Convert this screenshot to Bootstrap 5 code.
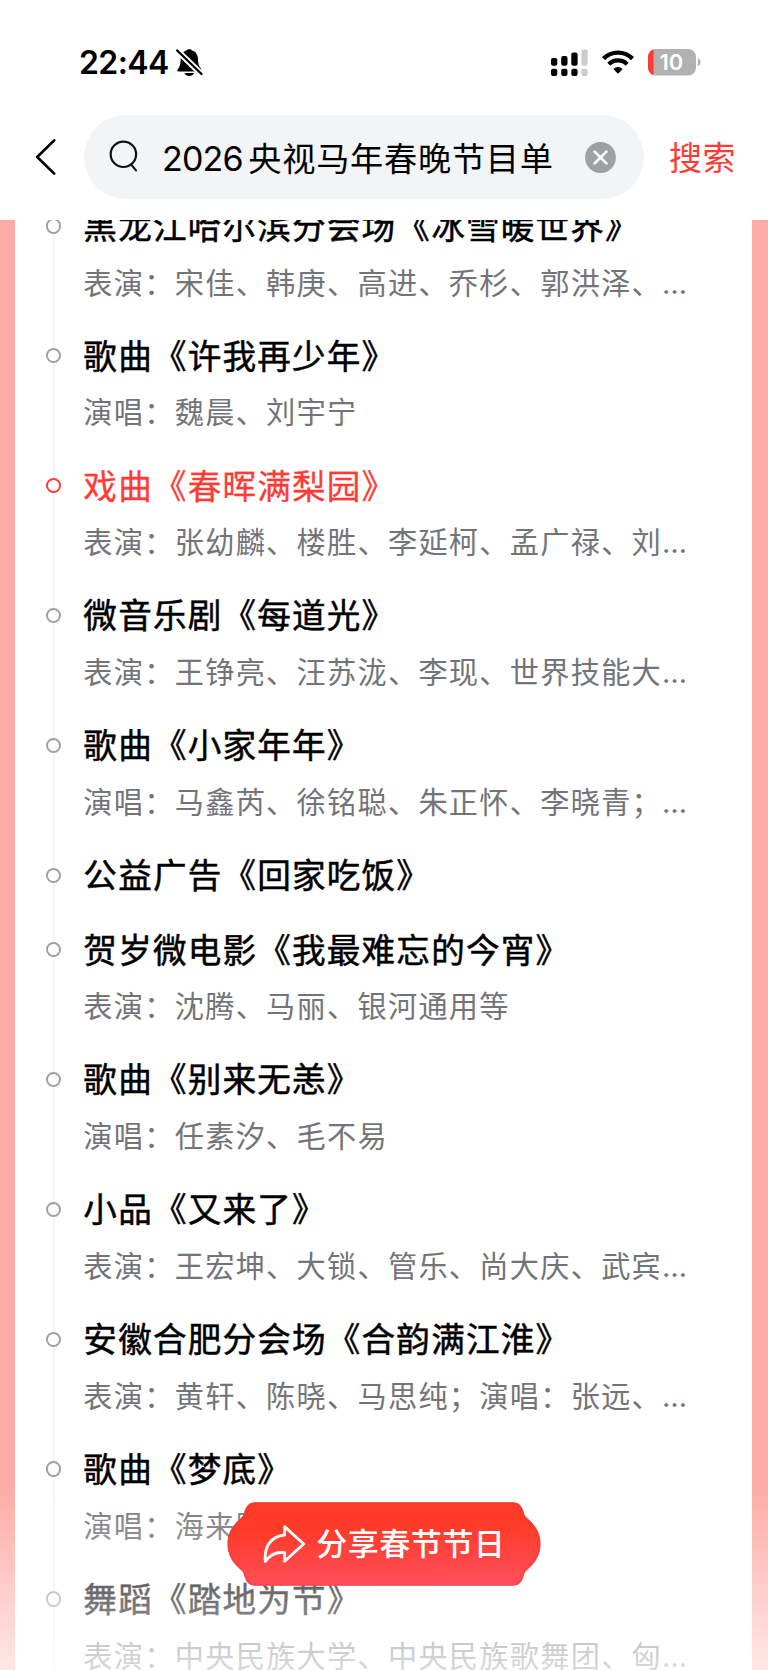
<!DOCTYPE html>
<html lang="zh-CN">
<head>
<meta charset="utf-8">
<meta name="viewport" content="width=device-width, initial-scale=1">
<title>2026央视马年春晚节目单</title>
<link href="https://cdn.jsdelivr.net/npm/bootstrap@5.3.0/dist/css/bootstrap.min.css" rel="stylesheet">
<style>
  body { font-family: "Noto Sans CJK SC", sans-serif; color: #000; background: #fff; }
  .screen { width: 768px; height: 1670px; }
  .latin { font-family: Inter, "Liberation Sans", sans-serif; }
  .top-bar { height: 220px; background: #fff; }
  .status-bar { height: 115px; padding: 46px 67px 0 79px; }
  .status-left { height: 33px; }
  .clock { font-size: 32px; font-weight: 600; line-height: 33px; letter-spacing: -.6px; width: 97px; }
  .status-right { height: 33px; }
  .search-row { height: 84px; }
  .back-btn { width: 84px; padding-left: 34px; }
  .search-pill { width: 559.5px; height: 84px; background: #f3f4f6; padding-left: 24px; }
  .query { font-size: 33.2px; line-height: 84px; height: 85px; letter-spacing: .75px; margin-left: 22px; width: 403px; }
  .query .latin { font-size: 34px; letter-spacing: -.8px; margin-right: 5.5px; }
  .search-link { font-size: 33px; line-height: 84px; height: 87px; letter-spacing: .6px; color: #ff3b36; margin-left: 25.5px; }
  .stage { height: 1450px; background: #feaba6; padding: 0 15.6px 0 15.4px; }
  .sheet { height: 1450px; background: #fff; }
  .program { margin-top: -17.2px; padding-left: 30.4px; }
  .entry { padding-bottom: 28.4px; }
  .entry::before { content: ""; position: absolute; left: 7px; top: 23px; bottom: -23px; width: 2px; background: #f4f4f5; }
  .dot { width: 15.4px; height: 15.4px; border: 2px solid #9fa0a6; background: #fff; margin-top: 15.4px; }
  .entry-body { margin-left: 22.2px; }
  .entry-title { font-size: 33.6px; line-height: 44px; height: 46px; letter-spacing: 1.2px; -webkit-text-stroke: .5px currentColor; }
  .entry-cast { font-size: 29.2px; line-height: 39.4px; height: 42.8px; letter-spacing: 1.27px; margin-top: 12.7px; color: #737478; }
  .entry-cast .latin { font-size: 29px; letter-spacing: -.5px; }
  .current .dot { border-color: #ff3b36; }
  .current .entry-title { color: #ff3b36; -webkit-text-stroke-width: .3px; }
  .fade-out { height: 185px; background: linear-gradient(rgba(255,255,255,0), rgba(255,255,255,.72)); }
  .share { left: 227px; top: 1501.5px; width: 314px; height: 84px; padding-left: 36px; color: #fff; }
  .share-label { font-size: 31px; font-weight: 500; letter-spacing: .5px; line-height: 84px; height: 87px; margin-left: 10px; }
</style>
</head>
<body>
<main class="screen position-relative overflow-hidden">
  <header class="top-bar">
    <div class="status-bar d-flex justify-content-between">
      <div class="status-left d-flex align-items-center">
        <span class="clock latin">22:44</span>
        <svg width="27" height="29" viewBox="0 0 27 29">
          <path d="M2 21 C4 18 4.500 16 4.700 11 C5 6 7.500 3.200 10.500 2.500 C11 .8 15.500 .8 16 2.500 C19.500 3.500 21.700 6 22 11 C22.200 16 23 18 25 20.500 C26 22 25 23.500 23.500 23.500 H2.500 C.8 23.500 .8 22.500 2 21Z M8.500 25 H18 C17 29 9.500 29 8.500 25Z"/>
          <path d="M0 1.500 L26 26.500" stroke="#fff" stroke-width="6"/>
          <path d="M1.200 2.500 L25.500 26" stroke="#000" stroke-width="2.300" stroke-linecap="round"/>
        </svg>
      </div>
      <div class="status-right d-flex align-items-center">
        <svg width="38" height="28" viewBox="0 0 38 28">
          <rect x="0" y="9" width="6.300" height="7.700" rx="2"/><rect x="10.200" y="7" width="6.300" height="9.700" rx="2"/><rect x="20.300" y="3.500" width="6.300" height="13.200" rx="2"/>
          <rect x="0" y="19.700" width="6.300" height="7.300" rx="2"/><rect x="10.200" y="19.700" width="6.300" height="7.300" rx="2"/><rect x="20.300" y="19.700" width="6.300" height="7.300" rx="2"/>
          <g fill="#ccc"><rect x="30.400" y=".5" width="6.300" height="16.200" rx="2"/><rect x="30.400" y="19.700" width="6.300" height="7.300" rx="2"/></g>
        </svg>
        <svg width="32" height="25" viewBox="0 0 32 25" style="margin-left:13px" fill="none" stroke="#000" stroke-width="4.400">
          <path d="M1.500 8.600 A20.500 20.500 0 0 1 30.500 8.600"/><path d="M6.800 14.200 A13 13 0 0 1 25.200 14.200"/>
          <path d="M11.300 19 Q16 15 20.700 19 L16 23.800Z" fill="#000" stroke="none"/>
        </svg>
        <svg width="53" height="27" viewBox="0 0 53 27" style="margin-left:14px">
          <defs><clipPath id="cell"><rect width="48" height="26.500" rx="8"/></clipPath></defs>
          <g clip-path="url(#cell)"><rect width="48" height="27" fill="#b1b1b1"/><rect width="5.500" height="27" fill="#ff3b36"/></g>
          <path d="M49.800 9.300 Q52.600 10.500 52.600 13.300 T49.800 17.300Z" fill="#b1b1b1"/>
          <text x="23.300" y="21.300" text-anchor="middle" fill="#fff" font-family="Inter, sans-serif" font-weight="600" font-size="22">10</text>
        </svg>
      </div>
    </div>
    <div class="search-row d-flex align-items-center">
      <div class="back-btn">
        <svg class="d-block" width="24" height="38" viewBox="0 0 24 38" fill="none" stroke="#000" stroke-width="2.700" stroke-linecap="round" stroke-linejoin="round"><path d="M20.200 2.400 L3.200 19 L20.200 35.600"/></svg>
      </div>
      <div class="search-pill rounded-pill d-flex align-items-center">
        <svg width="32" height="34" viewBox="0 0 32 34" fill="none" stroke="#111" stroke-width="2.200" stroke-linecap="round"><circle cx="15.400" cy="14.300" r="12.700"/><path d="M23 24.400 L28 30.400"/></svg>
        <span class="query text-nowrap"><span class="latin">2026</span>央视马年春晚节目单</span>
        <svg width="31" height="31" viewBox="0 0 31 31" style="margin-left:20px"><circle cx="15.500" cy="15.500" r="15.400" fill="#9fa0a5"/><path d="M9.600 9.600 L21.400 21.400 M21.400 9.600 L9.600 21.400" stroke="#fff" stroke-width="2.700" stroke-linecap="round"/></svg>
      </div>
      <span class="search-link text-nowrap">搜索</span>
    </div>
  </header>

  <section class="stage">
    <div class="sheet overflow-hidden">
      <div class="program" id="program"></div>
    </div>
  </section>

  <div class="fade-out position-absolute bottom-0 start-0 w-100"></div>

  <div class="share position-absolute d-flex align-items-center" role="button">
    <svg class="position-absolute top-0 start-0" width="314" height="84" viewBox="0 0 314 84">
      <defs>
        <linearGradient id="red" x1=".46" y1="0" x2=".54" y2="1"><stop offset=".3" stop-color="#ff3b28"/><stop offset="1" stop-color="#ff4e5c"/></linearGradient>
        <clipPath id="plaque"><path id="edge" d="M28 .2 H286 C292 .2 295 4.500 296.500 9.500 C297.200 13 298.500 14.800 300.800 16.800 C309 23.500 313.500 32 313.500 42 C313.500 52 309 60.500 300.800 67.200 C298.500 69.200 297.200 71 296.500 74.500 C295 79.500 292 83.800 286 83.800 H28 C22 83.800 19 79.500 17.500 74.500 C16.800 71 15.500 69.200 13.200 67.200 C5 60.500 .5 52 .5 42 C.5 32 5 23.500 13.200 16.800 C15.500 14.800 16.800 13 17.500 9.500 C19 4.500 22 .2 28 .2Z"/></clipPath>
        <filter id="soft"><feGaussianBlur stdDeviation="1.300"/></filter>
      </defs>
      <g clip-path="url(#plaque)">
        <rect width="314" height="84" fill="url(#red)"/>
        <use href="#edge" fill="none" stroke="#d93a40" stroke-opacity=".6" stroke-width="2.200" filter="url(#soft)"/>
      </g>
    </svg>
    <svg class="position-relative" width="43.300" height="39.300" viewBox="190 128 130 118" fill="none" stroke="#fff" stroke-width="8.500" stroke-linejoin="round"><path d="M255 136 L312 188 L255 240 V214 C230 211 210 222 197 240 C193 198 212 165 255 161Z"/></svg>
    <span class="share-label position-relative text-nowrap">分享春节节日</span>
  </div>
</main>

<script src="https://cdn.jsdelivr.net/npm/bootstrap@5.3.0/dist/js/bootstrap.bundle.min.js"></script>
<script>
  const entries = [
    ["黑龙江哈尔滨分会场《冰雪暖世界》", "表演：宋佳、韩庚、高进、乔杉、郭洪泽、…"],
    ["歌曲《许我再少年》", "演唱：魏晨、刘宇宁"],
    ["戏曲《春晖满梨园》", "表演：张幼麟、楼胜、李延柯、孟广禄、刘…", true],
    ["微音乐剧《每道光》", "表演：王铮亮、汪苏泷、李现、世界技能大…"],
    ["歌曲《小家年年》", "演唱：马鑫芮、徐铭聪、朱正怀、李晓青；…"],
    ["公益广告《回家吃饭》", ""],
    ["贺岁微电影《我最难忘的今宵》", "表演：沈腾、马丽、银河通用等"],
    ["歌曲《别来无恙》", "演唱：任素汐、毛不易"],
    ["小品《又来了》", "表演：王宏坤、大锁、管乐、尚大庆、武宾…"],
    ["安徽合肥分会场《合韵满江淮》", "表演：黄轩、陈晓、马思纯；演唱：张远、…"],
    ["歌曲《梦底》", "演唱：海来阿木"],
    ["舞蹈《踏地为节》", "表演：中央民族大学、中央民族歌舞团、匈…"]
  ];
  document.getElementById("program").innerHTML = entries.map(([title, cast, current]) => `
    <div class="entry position-relative d-flex align-items-start${current ? " current" : ""}">
      <span class="dot rounded-circle position-relative flex-shrink-0"></span>
      <div class="entry-body text-nowrap">
        <div class="entry-title">${title}</div>
        ${cast ? `<div class="entry-cast">${cast.replace("…", '<span class="latin">…</span>')}</div>` : ""}
      </div>
    </div>`).join("");
</script>
</body>
</html>
